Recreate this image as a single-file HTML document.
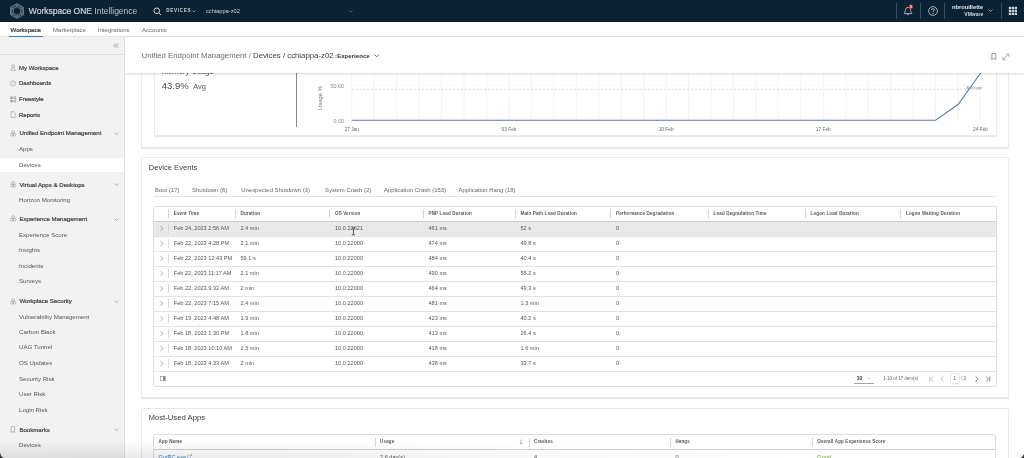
<!DOCTYPE html><html><head><meta charset="utf-8"><style>
html,body{margin:0;padding:0;width:1024px;height:458px;overflow:hidden;background:#fff;font-family:"Liberation Sans",sans-serif;}
#root{position:absolute;left:0;top:0;width:1024px;height:458px;overflow:hidden;background:#fff;will-change:transform;filter:blur(0.3px);}
.md{-webkit-text-stroke:0.22px currentColor;}
.t{position:absolute;white-space:nowrap;line-height:10px;height:10px;}
.b{position:absolute;box-sizing:border-box;}
svg{position:absolute;overflow:visible}
</style></head><body><div id="root">
<div class="b" style="left:140.5px;top:30px;width:868px;height:118px;background:#fff;border:1px solid #eaeaea;border-radius:2px;box-shadow:0 1.2px 1px -0.4px rgba(0,0,0,0.10);"></div>
<div class="b" style="left:153.5px;top:30px;width:843px;height:106px;background:#fff;border:1px solid #eaeaea;border-radius:2px;box-shadow:0 1.2px 1px -0.4px rgba(0,0,0,0.10);"></div>
<div class="b" style="left:296.2px;top:40px;width:0.7px;height:87.3px;background:#8a8a8a;"></div>
<div class="t " style="left:161.7px;top:67.40px;font-size:7.7px;color:#505050;font-weight:400;">Memory Usage</div>
<div class="t " style="left:161.7px;top:81.30px;font-size:9.5px;color:#4a4a4a;font-weight:400;">43.9%</div>
<div class="t " style="left:193.2px;top:82.20px;font-size:7.5px;color:#555;font-weight:400;">Avg</div>
<svg style="left:0;top:0" width="1024" height="458"><line x1="351.75" y1="40" x2="351.75" y2="120.5" stroke="#ececec" stroke-width="0.6"/><line x1="374.21" y1="40" x2="374.21" y2="120.5" stroke="#ececec" stroke-width="0.6"/><line x1="396.66" y1="40" x2="396.66" y2="120.5" stroke="#ececec" stroke-width="0.6"/><line x1="419.12" y1="40" x2="419.12" y2="120.5" stroke="#ececec" stroke-width="0.6"/><line x1="441.57" y1="40" x2="441.57" y2="120.5" stroke="#ececec" stroke-width="0.6"/><line x1="464.03" y1="40" x2="464.03" y2="120.5" stroke="#ececec" stroke-width="0.6"/><line x1="486.48" y1="40" x2="486.48" y2="120.5" stroke="#ececec" stroke-width="0.6"/><line x1="508.94" y1="40" x2="508.94" y2="120.5" stroke="#ececec" stroke-width="0.6"/><line x1="531.39" y1="40" x2="531.39" y2="120.5" stroke="#ececec" stroke-width="0.6"/><line x1="553.85" y1="40" x2="553.85" y2="120.5" stroke="#ececec" stroke-width="0.6"/><line x1="576.30" y1="40" x2="576.30" y2="120.5" stroke="#ececec" stroke-width="0.6"/><line x1="598.76" y1="40" x2="598.76" y2="120.5" stroke="#ececec" stroke-width="0.6"/><line x1="621.21" y1="40" x2="621.21" y2="120.5" stroke="#ececec" stroke-width="0.6"/><line x1="643.67" y1="40" x2="643.67" y2="120.5" stroke="#ececec" stroke-width="0.6"/><line x1="666.12" y1="40" x2="666.12" y2="120.5" stroke="#ececec" stroke-width="0.6"/><line x1="688.58" y1="40" x2="688.58" y2="120.5" stroke="#ececec" stroke-width="0.6"/><line x1="711.04" y1="40" x2="711.04" y2="120.5" stroke="#ececec" stroke-width="0.6"/><line x1="733.49" y1="40" x2="733.49" y2="120.5" stroke="#ececec" stroke-width="0.6"/><line x1="755.95" y1="40" x2="755.95" y2="120.5" stroke="#ececec" stroke-width="0.6"/><line x1="778.40" y1="40" x2="778.40" y2="120.5" stroke="#ececec" stroke-width="0.6"/><line x1="800.86" y1="40" x2="800.86" y2="120.5" stroke="#ececec" stroke-width="0.6"/><line x1="823.31" y1="40" x2="823.31" y2="120.5" stroke="#ececec" stroke-width="0.6"/><line x1="845.77" y1="40" x2="845.77" y2="120.5" stroke="#ececec" stroke-width="0.6"/><line x1="868.22" y1="40" x2="868.22" y2="120.5" stroke="#ececec" stroke-width="0.6"/><line x1="890.68" y1="40" x2="890.68" y2="120.5" stroke="#ececec" stroke-width="0.6"/><line x1="913.13" y1="40" x2="913.13" y2="120.5" stroke="#ececec" stroke-width="0.6"/><line x1="935.59" y1="40" x2="935.59" y2="120.5" stroke="#ececec" stroke-width="0.6"/><line x1="958.04" y1="40" x2="958.04" y2="120.5" stroke="#ececec" stroke-width="0.6"/><line x1="980.50" y1="40" x2="980.50" y2="120.5" stroke="#ececec" stroke-width="0.6"/><line x1="351.75" y1="89.25" x2="980.5" y2="89.25" stroke="#c6c6c6" stroke-width="0.6" stroke-dasharray="2,1.9"/><line x1="351.75" y1="85" x2="980.5" y2="85" stroke="#f0f0f0" stroke-width="0.5"/><polyline points="351.75,120.25 935.59,120.25 958.04,104.5 988.5,62" fill="none" stroke="#5a7b9e" stroke-width="1.05"/></svg>
<div class="t" style="right:680px;top:80.80px;font-size:5.4px;color:#8a8a8a;font-weight:400;">50.00</div>
<div class="t" style="right:680px;top:115.60px;font-size:5.4px;color:#8a8a8a;font-weight:400;">0.00</div>
<div class="t" style="left:300px;top:92.5px;width:40px;text-align:center;font-size:5.9px;color:#777;transform:rotate(-90deg);">Usage %</div>
<div class="t" style="left:251.75px;width:200px;text-align:center;top:124.50px;font-size:4.8px;color:#666;font-weight:400;">27 Jan</div>
<div class="t" style="left:409px;width:200px;text-align:center;top:124.50px;font-size:4.8px;color:#666;font-weight:400;">03 Feb</div>
<div class="t" style="left:566.1px;width:200px;text-align:center;top:124.50px;font-size:4.8px;color:#666;font-weight:400;">10 Feb</div>
<div class="t" style="left:723.3px;width:200px;text-align:center;top:124.50px;font-size:4.8px;color:#666;font-weight:400;">17 Feb</div>
<div class="t" style="left:880.5px;width:200px;text-align:center;top:124.50px;font-size:4.8px;color:#666;font-weight:400;">24 Feb</div>
<div class="t" style="right:41.5px;top:82.70px;font-size:4.4px;color:#8a8a8a;font-weight:400;">Average</div>
<div class="b" style="left:140.5px;top:157px;width:868px;height:241px;background:#fff;border:1px solid #eaeaea;border-radius:2px;box-shadow:0 1.2px 1px -0.4px rgba(0,0,0,0.10);"></div>
<div class="t " style="left:148.8px;top:162.80px;font-size:7.6px;color:#3a3a3a;font-weight:400;">Device Events</div>
<div class="t " style="left:155px;top:184.80px;font-size:5.95px;color:#666;font-weight:400;">Boot (17)</div>
<div class="t " style="left:192px;top:184.80px;font-size:5.95px;color:#666;font-weight:400;">Shutdown (6)</div>
<div class="t " style="left:241.25px;top:184.80px;font-size:5.95px;color:#666;font-weight:400;">Unexpected Shutdown (3)</div>
<div class="t " style="left:325px;top:184.80px;font-size:5.95px;color:#666;font-weight:400;">System Crash (2)</div>
<div class="t " style="left:384px;top:184.80px;font-size:5.95px;color:#666;font-weight:400;">Application Crash (153)</div>
<div class="t " style="left:458.5px;top:184.80px;font-size:5.95px;color:#666;font-weight:400;">Application Hang (18)</div>
<div class="b" style="left:154px;top:196px;width:842px;height:1px;background:#e6e6e6;"></div>
<div class="b" style="left:153.4px;top:206px;width:843.6px;height:180.5px;background:#fff;border:1px solid #dcdcdc;border-radius:2.5px;"></div>
<div class="b" style="left:154.4px;top:221px;width:841.6px;height:15px;background:#e9e9e9;"></div>
<div class="b" style="left:154.4px;top:221px;width:841.6px;height:1px;background:#e2e2e2;"></div>
<div class="b" style="left:154.4px;top:236px;width:841.6px;height:1px;background:#e2e2e2;"></div>
<div class="b" style="left:154.4px;top:251px;width:841.6px;height:1px;background:#e2e2e2;"></div>
<div class="b" style="left:154.4px;top:266px;width:841.6px;height:1px;background:#e2e2e2;"></div>
<div class="b" style="left:154.4px;top:281px;width:841.6px;height:1px;background:#e2e2e2;"></div>
<div class="b" style="left:154.4px;top:296px;width:841.6px;height:1px;background:#e2e2e2;"></div>
<div class="b" style="left:154.4px;top:311px;width:841.6px;height:1px;background:#e2e2e2;"></div>
<div class="b" style="left:154.4px;top:326px;width:841.6px;height:1px;background:#e2e2e2;"></div>
<div class="b" style="left:154.4px;top:341px;width:841.6px;height:1px;background:#e2e2e2;"></div>
<div class="b" style="left:154.4px;top:356px;width:841.6px;height:1px;background:#e2e2e2;"></div>
<div class="b" style="left:154.4px;top:371px;width:841.6px;height:1px;background:#e2e2e2;"></div>
<div class="b" style="left:154.4px;top:220.5px;width:841.6px;height:1px;background:#d0d0d0;"></div>
<div class="b" style="left:167.85px;top:209px;width:0.6px;height:9px;background:#d5d5d5;"></div>
<div class="t " style="left:173.75px;top:209.20px;font-size:4.5px;color:#555;font-weight:700;letter-spacing:0.15px;">Event Time</div>
<div class="b" style="left:234.6px;top:209px;width:0.6px;height:9px;background:#d5d5d5;"></div>
<div class="t " style="left:240.5px;top:209.20px;font-size:4.5px;color:#555;font-weight:700;letter-spacing:0.15px;">Duration</div>
<div class="b" style="left:329.1px;top:209px;width:0.6px;height:9px;background:#d5d5d5;"></div>
<div class="t " style="left:335px;top:209.20px;font-size:4.5px;color:#555;font-weight:700;letter-spacing:0.15px;">OS Version</div>
<div class="b" style="left:422.6px;top:209px;width:0.6px;height:9px;background:#d5d5d5;"></div>
<div class="t " style="left:428.5px;top:209.20px;font-size:4.5px;color:#555;font-weight:700;letter-spacing:0.15px;">PNP Load Duration</div>
<div class="b" style="left:514.6px;top:209px;width:0.6px;height:9px;background:#d5d5d5;"></div>
<div class="t " style="left:520.5px;top:209.20px;font-size:4.5px;color:#555;font-weight:700;letter-spacing:0.15px;">Main Path Load Duration</div>
<div class="b" style="left:610.1px;top:209px;width:0.6px;height:9px;background:#d5d5d5;"></div>
<div class="t " style="left:616px;top:209.20px;font-size:4.5px;color:#555;font-weight:700;letter-spacing:0.15px;">Performance Degradation</div>
<div class="b" style="left:707.6px;top:209px;width:0.6px;height:9px;background:#d5d5d5;"></div>
<div class="t " style="left:713.5px;top:209.20px;font-size:4.5px;color:#555;font-weight:700;letter-spacing:0.15px;">Load Degradation Time</div>
<div class="b" style="left:804.6px;top:209px;width:0.6px;height:9px;background:#d5d5d5;"></div>
<div class="t " style="left:810.5px;top:209.20px;font-size:4.5px;color:#555;font-weight:700;letter-spacing:0.15px;">Logon Load Duration</div>
<div class="b" style="left:900.1px;top:209px;width:0.6px;height:9px;background:#d5d5d5;"></div>
<div class="t " style="left:906px;top:209.20px;font-size:4.5px;color:#555;font-weight:700;letter-spacing:0.15px;">Logon Waiting Duration</div>
<div class="b" style="left:167.8px;top:223.9px;width:0.6px;height:9px;background:#d8d8d8;"></div>
<svg style="left:159.6px;top:226.30px" width="4" height="6"><polyline points="0.5,0.3 3,2.5 0.5,4.7" fill="none" stroke="#707070" stroke-width="0.6"/></svg>
<div class="t " style="left:173.75px;top:223.40px;font-size:5.6px;color:#565656;font-weight:400;">Feb 24, 2023 2:56 AM</div>
<div class="t " style="left:240.5px;top:223.40px;font-size:5.6px;color:#565656;font-weight:400;">2.4 min</div>
<div class="t " style="left:335px;top:223.40px;font-size:5.6px;color:#565656;font-weight:400;">10.0.22621</div>
<div class="t " style="left:428.5px;top:223.40px;font-size:5.6px;color:#565656;font-weight:400;">461 ms</div>
<div class="t " style="left:520.5px;top:223.40px;font-size:5.6px;color:#565656;font-weight:400;">52 s</div>
<div class="t " style="left:616px;top:223.40px;font-size:5.6px;color:#565656;font-weight:400;">0</div>
<div class="b" style="left:167.8px;top:238.9px;width:0.6px;height:9px;background:#d8d8d8;"></div>
<svg style="left:159.6px;top:241.30px" width="4" height="6"><polyline points="0.5,0.3 3,2.5 0.5,4.7" fill="none" stroke="#707070" stroke-width="0.6"/></svg>
<div class="t " style="left:173.75px;top:238.40px;font-size:5.6px;color:#565656;font-weight:400;">Feb 22, 2023 4:28 PM</div>
<div class="t " style="left:240.5px;top:238.40px;font-size:5.6px;color:#565656;font-weight:400;">2.1 min</div>
<div class="t " style="left:335px;top:238.40px;font-size:5.6px;color:#565656;font-weight:400;">10.0.22000</div>
<div class="t " style="left:428.5px;top:238.40px;font-size:5.6px;color:#565656;font-weight:400;">474 ms</div>
<div class="t " style="left:520.5px;top:238.40px;font-size:5.6px;color:#565656;font-weight:400;">49.8 s</div>
<div class="t " style="left:616px;top:238.40px;font-size:5.6px;color:#565656;font-weight:400;">0</div>
<div class="b" style="left:167.8px;top:253.89999999999998px;width:0.6px;height:9px;background:#d8d8d8;"></div>
<svg style="left:159.6px;top:256.30px" width="4" height="6"><polyline points="0.5,0.3 3,2.5 0.5,4.7" fill="none" stroke="#707070" stroke-width="0.6"/></svg>
<div class="t " style="left:173.75px;top:253.40px;font-size:5.6px;color:#565656;font-weight:400;">Feb 22, 2023 12:43 PM</div>
<div class="t " style="left:240.5px;top:253.40px;font-size:5.6px;color:#565656;font-weight:400;">59.1 s</div>
<div class="t " style="left:335px;top:253.40px;font-size:5.6px;color:#565656;font-weight:400;">10.0.22000</div>
<div class="t " style="left:428.5px;top:253.40px;font-size:5.6px;color:#565656;font-weight:400;">484 ms</div>
<div class="t " style="left:520.5px;top:253.40px;font-size:5.6px;color:#565656;font-weight:400;">40.4 s</div>
<div class="t " style="left:616px;top:253.40px;font-size:5.6px;color:#565656;font-weight:400;">0</div>
<div class="b" style="left:167.8px;top:268.9px;width:0.6px;height:9px;background:#d8d8d8;"></div>
<svg style="left:159.6px;top:271.30px" width="4" height="6"><polyline points="0.5,0.3 3,2.5 0.5,4.7" fill="none" stroke="#707070" stroke-width="0.6"/></svg>
<div class="t " style="left:173.75px;top:268.40px;font-size:5.6px;color:#565656;font-weight:400;">Feb 22, 2023 11:17 AM</div>
<div class="t " style="left:240.5px;top:268.40px;font-size:5.6px;color:#565656;font-weight:400;">2.1 min</div>
<div class="t " style="left:335px;top:268.40px;font-size:5.6px;color:#565656;font-weight:400;">10.0.22000</div>
<div class="t " style="left:428.5px;top:268.40px;font-size:5.6px;color:#565656;font-weight:400;">490 ms</div>
<div class="t " style="left:520.5px;top:268.40px;font-size:5.6px;color:#565656;font-weight:400;">58.2 s</div>
<div class="t " style="left:616px;top:268.40px;font-size:5.6px;color:#565656;font-weight:400;">0</div>
<div class="b" style="left:167.8px;top:283.9px;width:0.6px;height:9px;background:#d8d8d8;"></div>
<svg style="left:159.6px;top:286.30px" width="4" height="6"><polyline points="0.5,0.3 3,2.5 0.5,4.7" fill="none" stroke="#707070" stroke-width="0.6"/></svg>
<div class="t " style="left:173.75px;top:283.40px;font-size:5.6px;color:#565656;font-weight:400;">Feb 22, 2023 9:32 AM</div>
<div class="t " style="left:240.5px;top:283.40px;font-size:5.6px;color:#565656;font-weight:400;">2 min</div>
<div class="t " style="left:335px;top:283.40px;font-size:5.6px;color:#565656;font-weight:400;">10.0.22000</div>
<div class="t " style="left:428.5px;top:283.40px;font-size:5.6px;color:#565656;font-weight:400;">464 ms</div>
<div class="t " style="left:520.5px;top:283.40px;font-size:5.6px;color:#565656;font-weight:400;">49.3 s</div>
<div class="t " style="left:616px;top:283.40px;font-size:5.6px;color:#565656;font-weight:400;">0</div>
<div class="b" style="left:167.8px;top:298.9px;width:0.6px;height:9px;background:#d8d8d8;"></div>
<svg style="left:159.6px;top:301.30px" width="4" height="6"><polyline points="0.5,0.3 3,2.5 0.5,4.7" fill="none" stroke="#707070" stroke-width="0.6"/></svg>
<div class="t " style="left:173.75px;top:298.40px;font-size:5.6px;color:#565656;font-weight:400;">Feb 22, 2023 7:15 AM</div>
<div class="t " style="left:240.5px;top:298.40px;font-size:5.6px;color:#565656;font-weight:400;">2.4 min</div>
<div class="t " style="left:335px;top:298.40px;font-size:5.6px;color:#565656;font-weight:400;">10.0.22000</div>
<div class="t " style="left:428.5px;top:298.40px;font-size:5.6px;color:#565656;font-weight:400;">481 ms</div>
<div class="t " style="left:520.5px;top:298.40px;font-size:5.6px;color:#565656;font-weight:400;">1.3 min</div>
<div class="t " style="left:616px;top:298.40px;font-size:5.6px;color:#565656;font-weight:400;">0</div>
<div class="b" style="left:167.8px;top:313.9px;width:0.6px;height:9px;background:#d8d8d8;"></div>
<svg style="left:159.6px;top:316.30px" width="4" height="6"><polyline points="0.5,0.3 3,2.5 0.5,4.7" fill="none" stroke="#707070" stroke-width="0.6"/></svg>
<div class="t " style="left:173.75px;top:313.40px;font-size:5.6px;color:#565656;font-weight:400;">Feb 19, 2023 4:48 AM</div>
<div class="t " style="left:240.5px;top:313.40px;font-size:5.6px;color:#565656;font-weight:400;">1.9 min</div>
<div class="t " style="left:335px;top:313.40px;font-size:5.6px;color:#565656;font-weight:400;">10.0.22000</div>
<div class="t " style="left:428.5px;top:313.40px;font-size:5.6px;color:#565656;font-weight:400;">423 ms</div>
<div class="t " style="left:520.5px;top:313.40px;font-size:5.6px;color:#565656;font-weight:400;">40.2 s</div>
<div class="t " style="left:616px;top:313.40px;font-size:5.6px;color:#565656;font-weight:400;">0</div>
<div class="b" style="left:167.8px;top:328.9px;width:0.6px;height:9px;background:#d8d8d8;"></div>
<svg style="left:159.6px;top:331.30px" width="4" height="6"><polyline points="0.5,0.3 3,2.5 0.5,4.7" fill="none" stroke="#707070" stroke-width="0.6"/></svg>
<div class="t " style="left:173.75px;top:328.40px;font-size:5.6px;color:#565656;font-weight:400;">Feb 18, 2023 1:30 PM</div>
<div class="t " style="left:240.5px;top:328.40px;font-size:5.6px;color:#565656;font-weight:400;">1.8 min</div>
<div class="t " style="left:335px;top:328.40px;font-size:5.6px;color:#565656;font-weight:400;">10.0.22000</div>
<div class="t " style="left:428.5px;top:328.40px;font-size:5.6px;color:#565656;font-weight:400;">413 ms</div>
<div class="t " style="left:520.5px;top:328.40px;font-size:5.6px;color:#565656;font-weight:400;">26.4 s</div>
<div class="t " style="left:616px;top:328.40px;font-size:5.6px;color:#565656;font-weight:400;">0</div>
<div class="b" style="left:167.8px;top:343.9px;width:0.6px;height:9px;background:#d8d8d8;"></div>
<svg style="left:159.6px;top:346.30px" width="4" height="6"><polyline points="0.5,0.3 3,2.5 0.5,4.7" fill="none" stroke="#707070" stroke-width="0.6"/></svg>
<div class="t " style="left:173.75px;top:343.40px;font-size:5.6px;color:#565656;font-weight:400;">Feb 18, 2023 10:10 AM</div>
<div class="t " style="left:240.5px;top:343.40px;font-size:5.6px;color:#565656;font-weight:400;">2.5 min</div>
<div class="t " style="left:335px;top:343.40px;font-size:5.6px;color:#565656;font-weight:400;">10.0.22000</div>
<div class="t " style="left:428.5px;top:343.40px;font-size:5.6px;color:#565656;font-weight:400;">418 ms</div>
<div class="t " style="left:520.5px;top:343.40px;font-size:5.6px;color:#565656;font-weight:400;">1.6 min</div>
<div class="t " style="left:616px;top:343.40px;font-size:5.6px;color:#565656;font-weight:400;">0</div>
<div class="b" style="left:167.8px;top:358.9px;width:0.6px;height:9px;background:#d8d8d8;"></div>
<svg style="left:159.6px;top:361.30px" width="4" height="6"><polyline points="0.5,0.3 3,2.5 0.5,4.7" fill="none" stroke="#707070" stroke-width="0.6"/></svg>
<div class="t " style="left:173.75px;top:358.40px;font-size:5.6px;color:#565656;font-weight:400;">Feb 18, 2023 4:33 AM</div>
<div class="t " style="left:240.5px;top:358.40px;font-size:5.6px;color:#565656;font-weight:400;">2 min</div>
<div class="t " style="left:335px;top:358.40px;font-size:5.6px;color:#565656;font-weight:400;">10.0.22000</div>
<div class="t " style="left:428.5px;top:358.40px;font-size:5.6px;color:#565656;font-weight:400;">438 ms</div>
<div class="t " style="left:520.5px;top:358.40px;font-size:5.6px;color:#565656;font-weight:400;">33.7 s</div>
<div class="t " style="left:616px;top:358.40px;font-size:5.6px;color:#565656;font-weight:400;">0</div>
<svg style="left:159.8px;top:375.8px" width="7" height="6"><rect x="0.4" y="0.4" width="4.8" height="4.4" fill="none" stroke="#888" stroke-width="0.6"/><rect x="3" y="0.4" width="2.2" height="4.4" fill="#888"/></svg>
<div class="t md" style="left:856.8px;top:373.60px;font-size:4.7px;color:#444;font-weight:400;">10</div>
<div class="b" style="left:854.4px;top:382.8px;width:19.2px;height:0.8px;background:#9aa5ad;"></div>
<svg style="left:867.3px;top:376.9px" width="4" height="3"><polyline points="0.5,0.5 2,2 3.5,0.5" fill="none" stroke="#aaa" stroke-width="0.5"/></svg>
<div class="t " style="left:883px;top:373.60px;font-size:4.5px;color:#666;font-weight:400;">1-10 of 17 item(s)</div>
<svg style="left:928px;top:375.5px" width="64" height="12"><line x1="1.6" y1="0.5" x2="1.6" y2="5.5" stroke="#aaa" stroke-width="0.7"/><polyline points="4.8,0.5 2.6,3 4.8,5.5" fill="none" stroke="#aaa" stroke-width="0.7"/><polyline points="15.4,0.5 13.2,3 15.4,5.5" fill="none" stroke="#aaa" stroke-width="0.7"/><rect x="22.5" y="-2.2" width="9" height="9.9" fill="#fff" stroke="#cfcfcf" stroke-width="0.5" rx="1.2"/><polyline points="47.6,0.5 49.8,3 47.6,5.5" fill="none" stroke="#555" stroke-width="0.7"/><polyline points="58.2,0.5 60.4,3 58.2,5.5" fill="none" stroke="#555" stroke-width="0.7"/><line x1="61.8" y1="0.5" x2="61.8" y2="5.5" stroke="#555" stroke-width="0.7"/></svg>
<div class="t " style="left:953.5px;top:373.60px;font-size:4.6px;color:#555;font-weight:400;">1</div>
<div class="t " style="left:961px;top:373.60px;font-size:4.6px;color:#666;font-weight:400;">/ 2</div>
<div class="b" style="left:140.5px;top:407.8px;width:868px;height:60px;background:#fff;border:1px solid #e8e8e8;border-radius:2px;"></div>
<div class="t " style="left:148.4px;top:413.30px;font-size:7.75px;color:#3a3a3a;font-weight:400;">Most-Used Apps</div>
<div class="b" style="left:153.4px;top:434.2px;width:843px;height:40px;background:#fff;border:1px solid #dcdcdc;border-radius:2.5px;"></div>
<div class="b" style="left:154.4px;top:449px;width:841px;height:1px;background:#d0d0d0;"></div>
<div class="t " style="left:158.6px;top:437.30px;font-size:4.5px;color:#555;font-weight:700;letter-spacing:0.15px;">App Name</div>
<div class="b" style="left:374.9px;top:437.5px;width:0.6px;height:9px;background:#d5d5d5;"></div>
<div class="t " style="left:380.1px;top:437.30px;font-size:4.5px;color:#555;font-weight:700;letter-spacing:0.15px;">Usage</div>
<div class="b" style="left:528.8px;top:437.5px;width:0.6px;height:9px;background:#d5d5d5;"></div>
<div class="t " style="left:534.0px;top:437.30px;font-size:4.5px;color:#555;font-weight:700;letter-spacing:0.15px;">Crashes</div>
<div class="b" style="left:670.1999999999999px;top:437.5px;width:0.6px;height:9px;background:#d5d5d5;"></div>
<div class="t " style="left:675.4px;top:437.30px;font-size:4.5px;color:#555;font-weight:700;letter-spacing:0.15px;">Hangs</div>
<div class="b" style="left:812.0px;top:437.5px;width:0.6px;height:9px;background:#d5d5d5;"></div>
<div class="t " style="left:817.2px;top:437.30px;font-size:4.5px;color:#555;font-weight:700;letter-spacing:0.15px;">Overall App Experience Score</div>
<svg style="left:519.3px;top:438.8px" width="4" height="6"><line x1="2" y1="0.5" x2="2" y2="5" stroke="#5a8fc0" stroke-width="0.6"/><polyline points="0.6,3.6 2,5 3.4,3.6" fill="none" stroke="#5a8fc0" stroke-width="0.6"/></svg>
<div class="t " style="left:158.4px;top:451.60px;font-size:5.6px;color:#3b78b0;font-weight:400;">GotRC.exe</div>
<svg style="left:186.7px;top:454px" width="5" height="5"><path d="M3,0.6 H4.4 V2 M4.4,0.6 L2.4,2.6 M3.6,3 V4.4 H0.6 V1.4 H2" fill="none" stroke="#5a8fc0" stroke-width="0.5"/></svg>
<div class="t " style="left:380px;top:451.60px;font-size:5.6px;color:#565656;font-weight:400;">2.6 day(s)</div>
<div class="t " style="left:534px;top:451.60px;font-size:5.6px;color:#565656;font-weight:400;">4</div>
<div class="t " style="left:675.5px;top:451.60px;font-size:5.6px;color:#565656;font-weight:400;">0</div>
<div class="t " style="left:817.3px;top:451.60px;font-size:5.6px;color:#5aa220;font-weight:400;">Good</div>
<div class="b" style="left:125px;top:37px;width:899px;height:35.5px;background:#fff;box-shadow:0 1px 2.5px rgba(0,0,0,0.16);"></div>
<div class="t " style="left:141.6px;top:50.80px;font-size:7.8px;color:#6a6a6a;font-weight:400;">Unified Endpoint Management / <span style="color:#3a3a3a">Devices / cchiappa-z02</span><span style="color:#333;font-weight:700;font-size:6.1px;margin-left:1.5px">:Experience</span></div>
<svg style="left:373.5px;top:53.5px" width="6" height="4"><polyline points="0.5,0.5 2.75,2.75 5,0.5" fill="none" stroke="#444" stroke-width="0.8"/></svg>
<svg style="left:990.5px;top:52.5px" width="6" height="8"><path d="M0.8,0.5 H4.8 V6.8 L2.8,5.2 L0.8,6.8 Z" fill="none" stroke="#777" stroke-width="0.7"/></svg>
<svg style="left:1001.5px;top:52.5px" width="8" height="8"><path d="M1,6.8 L6.6,1.2 M4.2,1 H6.8 V3.6 M1,4.2 V6.9 H3.6" fill="none" stroke="#8a8a8a" stroke-width="0.7"/></svg>
<div class="b" style="left:0px;top:37px;width:125px;height:421px;background:#f2f2f2;border-right:1px solid #dedede;"></div>
<div class="b" style="left:0px;top:54px;width:124px;height:1px;background:#dcdcdc;"></div>
<svg style="left:112.6px;top:42.6px" width="6" height="6"><polyline points="2.8,0.5 0.9,2.6 2.8,4.7" fill="none" stroke="#8c8c8c" stroke-width="0.8"/><polyline points="5.1,0.5 3.2,2.6 5.1,4.7" fill="none" stroke="#8c8c8c" stroke-width="0.8"/></svg>
<div class="b" style="left:0px;top:158.3px;width:124px;height:13.7px;background:#fff;"></div>
<div class="t md" style="left:19px;top:62.75px;font-size:6.0px;color:#444;font-weight:400;">My Workspace</div>
<svg style="left:9.6px;top:64.35px;transform:scale(1.05);transform-origin:0 0" width="7" height="7"><circle cx="3" cy="1.9" r="1.4" fill="none" stroke="#9a9a9a" stroke-width="0.6"/><path d="M0.9,6.2 V5.2 Q0.9,3.8 3,3.8 Q5.1,3.8 5.1,5.2 V6.2 Z" fill="none" stroke="#9a9a9a" stroke-width="0.6"/></svg>
<div class="t md" style="left:19px;top:78.00px;font-size:6.0px;color:#444;font-weight:400;">Dashboards</div>
<svg style="left:9.6px;top:79.60px;transform:scale(1.05);transform-origin:0 0" width="7" height="7"><circle cx="3" cy="3.3" r="2.5" fill="none" stroke="#9a9a9a" stroke-width="0.6"/><line x1="2.7" y1="3.8" x2="4" y2="2.1" stroke="#9a9a9a" stroke-width="0.6"/></svg>
<div class="t md" style="left:19px;top:94.00px;font-size:6.0px;color:#444;font-weight:400;">Freestyle</div>
<svg style="left:9.6px;top:95.60px;transform:scale(1.05);transform-origin:0 0" width="7" height="7"><rect x="0.7" y="0.8" width="1.8" height="1.8" fill="none" stroke="#9a9a9a" stroke-width="0.6"/><rect x="3.7" y="0.8" width="1.8" height="1.8" fill="none" stroke="#9a9a9a" stroke-width="0.6"/><rect x="0.7" y="3.9" width="1.8" height="1.8" fill="none" stroke="#9a9a9a" stroke-width="0.6"/><rect x="3.7" y="3.9" width="1.8" height="1.8" fill="none" stroke="#9a9a9a" stroke-width="0.6"/></svg>
<div class="t md" style="left:19px;top:109.50px;font-size:6.0px;color:#444;font-weight:400;">Reports</div>
<svg style="left:9.6px;top:111.10px;transform:scale(1.05);transform-origin:0 0" width="7" height="7"><path d="M1,0.7 H3.8 L5,1.9 V6.2 H1 Z" fill="none" stroke="#9a9a9a" stroke-width="0.6"/></svg>
<div class="t md" style="left:19.4px;top:128.40px;font-size:6.1px;color:#444;font-weight:400;">Unified Endpoint Management</div>
<svg style="left:113.8px;top:132.10px" width="5" height="3"><polyline points="0.5,0.5 2.5,2.5 4.5,0.5" fill="none" stroke="#888" stroke-width="0.6"/></svg>
<svg style="left:9.6px;top:130.00px;transform:scale(1.05);transform-origin:0 0" width="7" height="7"><circle cx="3" cy="2.1" r="1.4" fill="none" stroke="#9a9a9a" stroke-width="0.6"/><circle cx="1.9" cy="4.4" r="1.4" fill="none" stroke="#9a9a9a" stroke-width="0.6"/><circle cx="4.1" cy="4.4" r="1.4" fill="none" stroke="#9a9a9a" stroke-width="0.6"/></svg>
<div class="t " style="left:19px;top:144.30px;font-size:6.1px;color:#555;font-weight:400;">Apps</div>
<div class="t " style="left:19px;top:159.70px;font-size:6.1px;color:#555;font-weight:400;">Devices</div>
<div class="t md" style="left:19.4px;top:179.50px;font-size:6.1px;color:#444;font-weight:400;">Virtual Apps &amp; Desktops</div>
<svg style="left:113.8px;top:183.20px" width="5" height="3"><polyline points="0.5,0.5 2.5,2.5 4.5,0.5" fill="none" stroke="#888" stroke-width="0.6"/></svg>
<svg style="left:9.6px;top:181.10px;transform:scale(1.05);transform-origin:0 0" width="7" height="7"><circle cx="3" cy="2.1" r="1.4" fill="none" stroke="#9a9a9a" stroke-width="0.6"/><circle cx="1.9" cy="4.4" r="1.4" fill="none" stroke="#9a9a9a" stroke-width="0.6"/><circle cx="4.1" cy="4.4" r="1.4" fill="none" stroke="#9a9a9a" stroke-width="0.6"/></svg>
<div class="t " style="left:19px;top:194.70px;font-size:6.1px;color:#555;font-weight:400;">Horizon Monitoring</div>
<div class="t md" style="left:19.4px;top:213.80px;font-size:6.1px;color:#444;font-weight:400;">Experience Management</div>
<svg style="left:113.8px;top:217.50px" width="5" height="3"><polyline points="0.5,0.5 2.5,2.5 4.5,0.5" fill="none" stroke="#888" stroke-width="0.6"/></svg>
<svg style="left:9.6px;top:215.40px;transform:scale(1.05);transform-origin:0 0" width="7" height="7"><circle cx="3" cy="2.1" r="1.4" fill="none" stroke="#9a9a9a" stroke-width="0.6"/><circle cx="1.9" cy="4.4" r="1.4" fill="none" stroke="#9a9a9a" stroke-width="0.6"/><circle cx="4.1" cy="4.4" r="1.4" fill="none" stroke="#9a9a9a" stroke-width="0.6"/></svg>
<div class="t " style="left:19px;top:229.70px;font-size:6.1px;color:#555;font-weight:400;">Experience Score</div>
<div class="t " style="left:19px;top:245.20px;font-size:6.1px;color:#555;font-weight:400;">Insights</div>
<div class="t " style="left:19px;top:260.70px;font-size:6.1px;color:#555;font-weight:400;">Incidents</div>
<div class="t " style="left:19px;top:276.20px;font-size:6.1px;color:#555;font-weight:400;">Surveys</div>
<div class="t md" style="left:19.4px;top:296.00px;font-size:6.1px;color:#444;font-weight:400;">Workplace Security</div>
<svg style="left:113.8px;top:299.70px" width="5" height="3"><polyline points="0.5,0.5 2.5,2.5 4.5,0.5" fill="none" stroke="#888" stroke-width="0.6"/></svg>
<svg style="left:9.6px;top:297.60px;transform:scale(1.05);transform-origin:0 0" width="7" height="7"><circle cx="3" cy="2.1" r="1.4" fill="none" stroke="#9a9a9a" stroke-width="0.6"/><circle cx="1.9" cy="4.4" r="1.4" fill="none" stroke="#9a9a9a" stroke-width="0.6"/><circle cx="4.1" cy="4.4" r="1.4" fill="none" stroke="#9a9a9a" stroke-width="0.6"/></svg>
<div class="t " style="left:19px;top:311.70px;font-size:6.1px;color:#555;font-weight:400;">Vulnerability Management</div>
<div class="t " style="left:19px;top:327.45px;font-size:6.1px;color:#555;font-weight:400;">Carbon Black</div>
<div class="t " style="left:19px;top:342.30px;font-size:6.1px;color:#555;font-weight:400;">UAG Tunnel</div>
<div class="t " style="left:19px;top:358.00px;font-size:6.1px;color:#555;font-weight:400;">OS Updates</div>
<div class="t " style="left:19px;top:373.90px;font-size:6.1px;color:#555;font-weight:400;">Security Risk</div>
<div class="t " style="left:19px;top:389.40px;font-size:6.1px;color:#555;font-weight:400;">User Risk</div>
<div class="t " style="left:19px;top:405.10px;font-size:6.1px;color:#555;font-weight:400;">Login Risk</div>
<div class="t md" style="left:19.4px;top:424.60px;font-size:6.1px;color:#444;font-weight:400;">Bookmarks</div>
<svg style="left:113.8px;top:428.30px" width="5" height="3"><polyline points="0.5,0.5 2.5,2.5 4.5,0.5" fill="none" stroke="#888" stroke-width="0.6"/></svg>
<svg style="left:9.9px;top:426.20px;transform:scale(1.05);transform-origin:0 0" width="7" height="7"><path d="M1,0.6 H4.4 V6.3 L2.7,4.9 L1,6.3 Z" fill="none" stroke="#9a9a9a" stroke-width="0.6"/></svg>
<div class="t " style="left:19px;top:439.70px;font-size:6.1px;color:#555;font-weight:400;">Devices</div>
<div class="b" style="left:0px;top:22px;width:1024px;height:15px;background:#fff;border-bottom:1px solid #e4e4e4;"></div>
<div class="t md" style="left:10.5px;top:24.80px;font-size:6.1px;color:#333;font-weight:400;">Workspace</div>
<div class="t " style="left:53px;top:24.80px;font-size:6.05px;color:#666;font-weight:400;">Marketplace</div>
<div class="t " style="left:97.75px;top:24.80px;font-size:6.1px;color:#666;font-weight:400;">Integrations</div>
<div class="t " style="left:142px;top:24.80px;font-size:6.05px;color:#666;font-weight:400;">Accounts</div>
<div class="b" style="left:9px;top:35.5px;width:33.5px;height:1.3px;background:#3d7ebf;"></div>
<div class="b" style="left:0px;top:0px;width:1024px;height:22px;background:#0b2235;"></div>
<svg style="left:8.85px;top:2.85px" width="16" height="16"><g fill="none" stroke="#a3b2bf" stroke-width="0.6"><polygon points="8.00,0.50 14.50,4.25 14.50,11.75 8.00,15.50 1.50,11.75 1.50,4.25"/><polygon points="8.00,1.90 13.28,4.95 13.28,11.05 8.00,14.10 2.72,11.05 2.72,4.95"/><polygon points="8.00,3.70 11.72,5.85 11.72,10.15 8.00,12.30 4.28,10.15 4.28,5.85"/><line x1="8.00" y1="1.90" x2="8.00" y2="3.70"/><line x1="13.28" y1="4.95" x2="11.72" y2="5.85"/><line x1="13.28" y1="11.05" x2="11.72" y2="10.15"/><line x1="8.00" y1="14.10" x2="8.00" y2="12.30"/><line x1="2.72" y1="11.05" x2="4.28" y2="10.15"/><line x1="2.72" y1="4.95" x2="4.28" y2="5.85"/></g></svg>
<div class="t " style="left:28.8px;top:6.00px;font-size:8.5px;color:#b8c3cc;font-weight:400;"><span style="-webkit-text-stroke:0.2px #dfe5ea">Workspace ONE</span> Intelligence</div>
<svg style="left:152.5px;top:6.5px" width="9" height="9"><circle cx="3.8" cy="3.8" r="2.8" fill="none" stroke="#dfe5ea" stroke-width="0.9"/><line x1="5.8" y1="5.8" x2="8" y2="8" stroke="#dfe5ea" stroke-width="0.9"/></svg>
<div class="t " style="left:166.3px;top:5.50px;font-size:4.6px;color:#c8d0d7;font-weight:700;letter-spacing:0.7px;">DEVICES</div>
<svg style="left:191.8px;top:10.2px" width="4" height="3"><polyline points="0.5,0.5 2,2 3.5,0.5" fill="none" stroke="#ccd" stroke-width="0.6"/></svg>
<div class="t " style="left:206px;top:5.80px;font-size:5.7px;color:#c8d0d7;font-weight:400;">cchiappa-z02</div>
<svg style="left:348.5px;top:9.5px" width="4" height="3"><polyline points="0.5,0.5 2,2 3.5,0.5" fill="none" stroke="#889" stroke-width="0.6"/></svg>
<div class="b" style="left:896.2px;top:2.8px;width:0.7px;height:16.4px;background:#3a4d5f;"></div>
<div class="b" style="left:919.9px;top:2.8px;width:0.7px;height:16.4px;background:#3a4d5f;"></div>
<div class="b" style="left:943.9px;top:2.8px;width:0.7px;height:16.4px;background:#3a4d5f;"></div>
<div class="b" style="left:1000.6px;top:2.8px;width:0.7px;height:16.4px;background:#3a4d5f;"></div>
<svg style="left:903.2px;top:4.6px" width="10" height="11"><path d="M1.2,8.6 Q2.3,7.6 2.3,5.4 Q2.3,2.4 5,2.4 Q7.7,2.4 7.7,5.4 Q7.7,7.6 8.8,8.6 Z" fill="none" stroke="#cfd6dc" stroke-width="0.75"/><path d="M4,9.4 Q5,10.4 6,9.4" fill="none" stroke="#cfd6dc" stroke-width="0.7"/></svg>
<svg style="left:908px;top:4px" width="6" height="6"><circle cx="2.8" cy="2.8" r="2.4" fill="#c9302c"/><text x="2.8" y="4.3" font-size="3.8" fill="#fff" text-anchor="middle" font-family="Liberation Sans" font-weight="700">3</text></svg>
<svg style="left:927.5px;top:5.7px" width="10" height="10"><circle cx="5" cy="5" r="4.4" fill="none" stroke="#cfd6dc" stroke-width="0.75"/><path d="M3.6,4 Q3.6,2.6 5,2.6 Q6.4,2.6 6.4,3.9 Q6.4,4.8 5,5.3 V6.2" fill="none" stroke="#cfd6dc" stroke-width="0.75"/><circle cx="5" cy="7.5" r="0.5" fill="#cfd6dc"/></svg>
<div class="t" style="right:40.799999999999955px;top:1.50px;font-size:5.75px;color:#e3e8ec;font-weight:700;">nbrouillette</div>
<div class="t" style="right:40.799999999999955px;top:9.40px;font-size:5.0px;color:#cdd4da;font-weight:700;">VMware</div>
<svg style="left:987.5px;top:9px" width="5" height="3"><polyline points="0.5,0.5 2.5,2.5 4.5,0.5" fill="none" stroke="#cfd6dc" stroke-width="0.7"/></svg>
<svg style="left:1008px;top:6px" width="10" height="10"><rect x="0.80" y="0.80" width="2.3" height="2.3" fill="#cfd6dc"/><rect x="0.80" y="3.75" width="2.3" height="2.3" fill="#cfd6dc"/><rect x="0.80" y="6.70" width="2.3" height="2.3" fill="#cfd6dc"/><rect x="3.75" y="0.80" width="2.3" height="2.3" fill="#cfd6dc"/><rect x="3.75" y="3.75" width="2.3" height="2.3" fill="#cfd6dc"/><rect x="3.75" y="6.70" width="2.3" height="2.3" fill="#cfd6dc"/><rect x="6.70" y="0.80" width="2.3" height="2.3" fill="#cfd6dc"/><rect x="6.70" y="3.75" width="2.3" height="2.3" fill="#cfd6dc"/><rect x="6.70" y="6.70" width="2.3" height="2.3" fill="#cfd6dc"/></svg>
<svg style="left:350.5px;top:226.8px" width="5" height="9"><path d="M0.8,0.6 Q2.4,0.6 2.4,1.6 Q2.4,0.6 4,0.6 M2.4,1.6 V7 M0.8,8 Q2.4,8 2.4,7 Q2.4,8 4,8" fill="none" stroke="#333" stroke-width="0.8"/></svg>
<div class="b" style="left:0px;top:440px;width:1024px;height:18px;background:radial-gradient(ellipse 700px 18px at 10% 100%, rgba(0,0,0,0.09), rgba(0,0,0,0.03) 60%, rgba(0,0,0,0) 100%);"></div>
<svg style="left:0;top:452px" width="4" height="6"><path d="M0,0 Q0.5,5 4,6 H0 Z" fill="#333"/></svg>
<svg style="left:1019px;top:454px" width="5" height="4"><path d="M5,0 Q4,3 1,4 H5 Z" fill="#333"/></svg>
</div></body></html>
